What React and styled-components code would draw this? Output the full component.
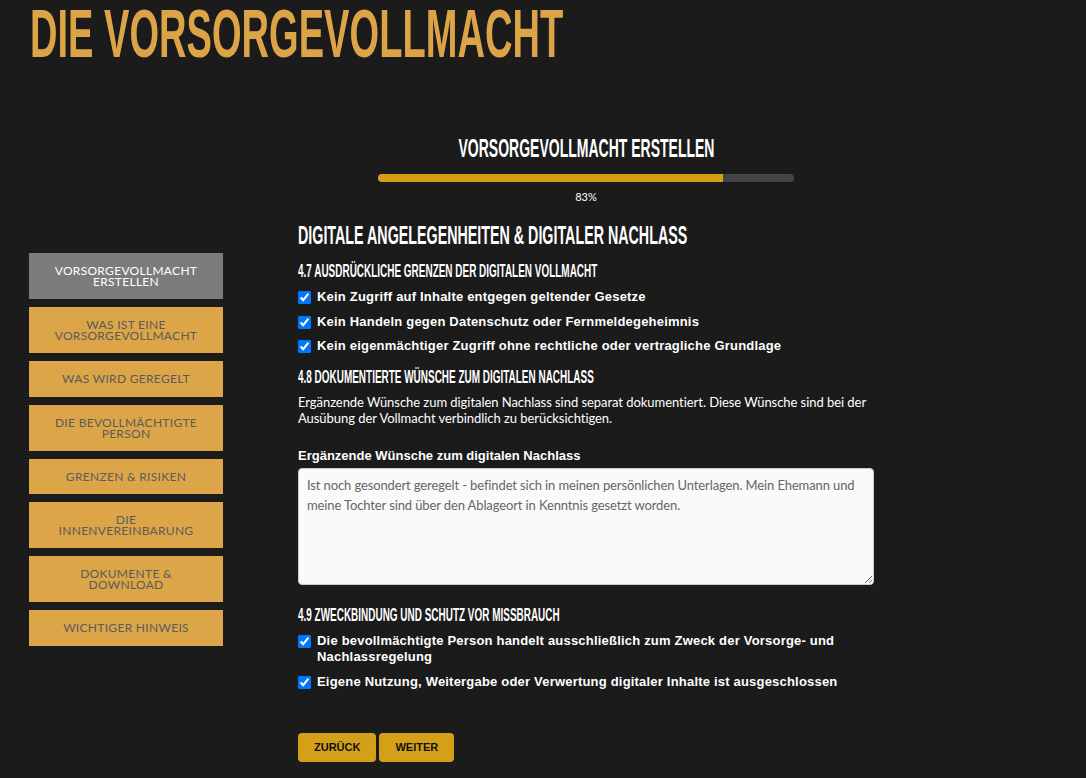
import React from 'react';
import styled, { createGlobalStyle } from 'styled-components';

const GlobalStyle = createGlobalStyle`
  html, body {
    margin: 0;
    padding: 0;
    background: #1b1b1b;
  }
  body {
    font-family: Lato, "Liberation Sans", sans-serif;
    color: #fff;
  }
`;

const SIDEBAR = [
  { label: 'Vorsorgevollmacht erstellen', active: true },
  { label: 'Was ist eine Vorsorgevollmacht' },
  { label: 'Was wird geregelt' },
  { label: 'Die bevollmächtigte Person' },
  { label: 'Grenzen & Risiken' },
  { label: 'Die Innenvereinbarung' },
  { label: 'Dokumente & Download' },
  { label: 'Wichtiger Hinweis' },
];

const LIMITS = [
  'Kein Zugriff auf Inhalte entgegen geltender Gesetze',
  'Kein Handeln gegen Datenschutz oder Fernmeldegeheimnis',
  'Kein eigenmächtiger Zugriff ohne rechtliche oder vertragliche Grundlage',
];

const PURPOSE = [
  'Die bevollmächtigte Person handelt ausschließlich zum Zweck der Vorsorge- und Nachlassregelung',
  'Eigene Nutzung, Weitergabe oder Verwertung digitaler Inhalte ist ausgeschlossen',
];

const WISHES = 'Ist noch gesondert geregelt - befindet sich in meinen persönlichen Unterlagen. Mein Ehemann und meine Tochter sind über den Ablageort in Kenntnis gesetzt worden.';

const PROGRESS = 83;

// headings use a squeezed bold sans to get the tall condensed look
function Narrow({ children }) {
  return <Squeeze>{children}</Squeeze>;
}

function CheckList({ items }) {
  return (
    <Checks>
      {items.map((text) => (
        <CheckRow key={text}>
          <CheckBox type="checkbox" checked readOnly />
          <span>{text}</span>
        </CheckRow>
      ))}
    </Checks>
  );
}

export default function App() {
  return (
    <Page>
      <GlobalStyle />
      <SiteTitle><Narrow>Die Vorsorgevollmacht</Narrow></SiteTitle>
      <Layout>
        <Sidebar>
          {SIDEBAR.map((item) => (
            <NavItem key={item.label} active={item.active}>{item.label}</NavItem>
          ))}
        </Sidebar>
        <Main>
          <StepTitle><Narrow>Vorsorgevollmacht erstellen</Narrow></StepTitle>
          <Progress>
            <ProgressFill style={{ width: `${PROGRESS}%` }} />
          </Progress>
          <Percent>{PROGRESS}%</Percent>

          <SectionTitle><Narrow>Digitale Angelegenheiten &amp; digitaler Nachlass</Narrow></SectionTitle>

          <SubTitle><Narrow>4.7 Ausdrückliche Grenzen der digitalen Vollmacht</Narrow></SubTitle>
          <CheckList items={LIMITS} />

          <SubTitle gap={13}><Narrow>4.8 Dokumentierte Wünsche zum digitalen Nachlass</Narrow></SubTitle>
          <Text>
            Ergänzende Wünsche zum digitalen Nachlass sind separat dokumentiert. Diese Wünsche sind bei der
            Ausübung der Vollmacht verbindlich zu berücksichtigen.
          </Text>
          <FieldLabel htmlFor="wishes">Ergänzende Wünsche zum digitalen Nachlass</FieldLabel>
          <Wishes id="wishes" defaultValue={WISHES} />

          <SubTitle gap={20}><Narrow>4.9 Zweckbindung und Schutz vor Missbrauch</Narrow></SubTitle>
          <CheckList items={PURPOSE} />

          <Buttons>
            <Button type="button">Zurück</Button>
            <Button type="button">Weiter</Button>
          </Buttons>
        </Main>
      </Layout>
    </Page>
  );
}

const Page = styled.div`
  min-height: 778px;
  padding-bottom: 14px;
  overflow: hidden;
`;

const Squeeze = styled.span`
  display: inline-block;
  white-space: nowrap;
  transform: scaleX(0.56);
  transform-origin: left center;
`;

const Heading = styled.div`
  font-family: "Liberation Sans", Arial, sans-serif;
  font-weight: 700;
  text-transform: uppercase;
  color: #fff;
`;

const SiteTitle = styled(Heading)`
  margin: 0;
  padding: 0 0 0 30px;
  font-size: 68px;
  line-height: 66px;
  color: #dca446;
`;

const Layout = styled.div`
  display: grid;
  grid-template-columns: 194px 576px;
  column-gap: 75px;
  padding: 67px 0 0 29px;
  align-items: start;
`;

const Sidebar = styled.nav`
  display: flex;
  flex-direction: column;
  gap: 8px;
  margin-top: 120px;
`;

const NavItem = styled.div`
  display: flex;
  align-items: center;
  justify-content: center;
  padding: 12.1px 22px;
  background: ${(p) => (p.active ? '#7b7b7b' : '#dba548')};
  color: ${(p) => (p.active ? '#fff' : '#5b5b5b')};
  font-family: Lato, "Liberation Sans", sans-serif;
  font-size: 12px;
  line-height: 11px;
  letter-spacing: 0.3px;
  text-transform: uppercase;
  text-align: center;
`;

const Main = styled.main`
  display: flex;
  flex-direction: column;
`;

const StepTitle = styled(Heading)`
  font-size: 25px;
  line-height: 30px;
  text-align: center;

  ${Squeeze} {
    transform-origin: center;
  }
`;

const Progress = styled.div`
  align-self: center;
  width: 416px;
  height: 8px;
  margin-top: 11px;
  border-radius: 4px;
  background: #444;
  overflow: hidden;
`;

const ProgressFill = styled.div`
  height: 100%;
  background: #d4a017;
`;

const Percent = styled.div`
  margin-top: 8px;
  text-align: center;
  font-size: 11px;
  line-height: 14px;
`;

const SectionTitle = styled(Heading)`
  margin-top: 17px;
  font-size: 25.5px;
  line-height: 28px;
`;

const SubTitle = styled(Heading)`
  margin-top: ${(p) => p.gap || 12}px;
  font-size: 17.8px;
  line-height: 20px;
`;

const Checks = styled.div`
  display: flex;
  flex-direction: column;
  gap: 8.5px;
  margin-top: 8px;
`;

const CheckRow = styled.label`
  display: flex;
  align-items: flex-start;
  gap: 6px;
  font-family: "Liberation Sans", Arial, sans-serif;
  font-weight: 700;
  font-size: 13px;
  line-height: 16px;
  letter-spacing: 0.2px;
  color: #fff;
`;

const CheckBox = styled.input`
  flex: none;
  width: 13px;
  height: 13px;
  margin: 2px 0 0;
  accent-color: #0075ff;
`;

const Text = styled.p`
  margin: 7px 0 0;
  font-size: 13px;
  line-height: 16px;
  letter-spacing: -0.05px;
  color: #fff;
`;

const FieldLabel = styled.label`
  margin-top: 22px;
  font-family: "Liberation Sans", Arial, sans-serif;
  font-weight: 700;
  font-size: 13px;
  line-height: 16px;
`;

const Wishes = styled.textarea`
  box-sizing: border-box;
  width: 100%;
  height: 117px;
  margin-top: 4px;
  padding: 6px 8px;
  border: 1px solid #ccc;
  border-radius: 4px;
  background: #fafafa;
  color: #666;
  font-family: Lato, "Liberation Sans", sans-serif;
  font-size: 13px;
  line-height: 20px;
  letter-spacing: -0.12px;
  resize: vertical;
`;

const Buttons = styled.div`
  display: flex;
  gap: 3px;
  margin-top: 43px;
`;

const Button = styled.button`
  height: 29px;
  padding: 0 16px;
  border: 0;
  border-radius: 4px;
  background: #d4a017;
  color: #111;
  font-family: "Liberation Sans", Arial, sans-serif;
  font-weight: 700;
  font-size: 11px;
  text-transform: uppercase;
  cursor: pointer;
`;
